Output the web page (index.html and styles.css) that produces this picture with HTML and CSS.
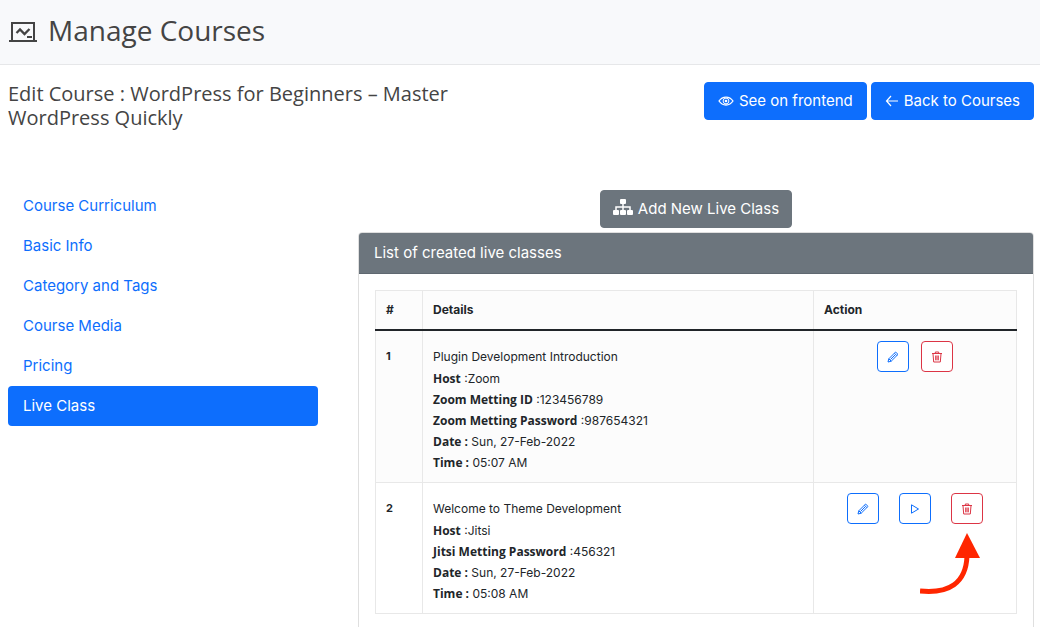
FILE: index.html
```html
<!DOCTYPE html>
<html lang="en">
<head>
<meta charset="utf-8">
<meta name="viewport" content="width=device-width, initial-scale=1">
<title>Manage Courses</title>
<link rel="stylesheet" href="styles.css">
</head>
<body>
<svg class="sprite" aria-hidden="true">
  <symbol id="pencil" viewBox="0 0 12 12">
    <path d="M1 11l.8-3.2L8.6 1l2.4 2.4-6.8 6.8zM1.8 7.8l2.4 2.4M7.4 2.2l2.4 2.4M3.4 8.6l4.8-4.8" fill="none" stroke="currentColor" stroke-linejoin="round"/>
  </symbol>
  <symbol id="trash" viewBox="0 0 12 12">
    <path d="M1 2.5h10M4.3 2.2V1h3.4v1.2M2 2.8l.7 8.2h6.6l.7-8.2M4.7 4.5v4.8M6 4.5v4.8M7.3 4.5v4.8" fill="none" stroke="currentColor"/>
  </symbol>
  <symbol id="play" viewBox="0 0 12 12">
    <path d="M2.5 1.8v8.4L9.5 6z" fill="none" stroke="currentColor"/>
  </symbol>
</svg>

<header class="page-header">
  <svg class="header-icon" viewBox="0 0 28 22" aria-hidden="true">
    <path d="M3 19V2h22v17M0 20h28" fill="none" stroke="currentColor" stroke-width="2"/>
    <path d="M7.5 12l3.5-3.500 4.500 4.500 5-5" fill="none" stroke="currentColor" stroke-width="2.300"/>
    <path d="M18 16h5" stroke="currentColor" stroke-width="2"/>
  </svg>
  <h1 class="page-title">Manage Courses</h1>
</header>

<main class="page">
  <div class="topbar">
    <h2 class="course-title">Edit Course : WordPress for Beginners – Master WordPress Quickly</h2>
    <div class="topbar-actions">
      <a class="btn btn-primary" href="#frontend">
        <svg class="icon-eye" viewBox="0 0 16 12" aria-hidden="true">
          <path d="M1 6c3.5-5.300 10.500-5.300 14 0-3.500 5.300-10.500 5.300-14 0z" fill="none" stroke="currentColor" stroke-width="1.300"/>
          <circle cx="8" cy="6" r="2.900" fill="none" stroke="currentColor"/>
          <circle cx="8" cy="6" r="1.300" fill="currentColor"/>
        </svg>
        See on frontend
      </a>
      <a class="btn btn-primary" href="#courses">
        <svg class="icon-back" viewBox="0 0 14 12" aria-hidden="true">
          <path d="M13 6H1.500M6 1L1.500 6 6 11" fill="none" stroke="currentColor" stroke-width="1.200"/>
        </svg>
        Back to Courses
      </a>
    </div>
  </div>

  <div class="columns">
    <nav class="side-nav" aria-label="Course sections">
      <a class="nav-link" href="#curriculum">Course Curriculum</a>
      <a class="nav-link" href="#info">Basic Info</a>
      <a class="nav-link" href="#category">Category and Tags</a>
      <a class="nav-link" href="#media">Course Media</a>
      <a class="nav-link" href="#pricing">Pricing</a>
      <a class="nav-link active" href="#live" aria-current="page">Live Class</a>
    </nav>

    <section class="content">
      <button class="btn btn-secondary" type="button">
        <svg class="icon-tree" viewBox="0 0 20 16" aria-hidden="true">
          <g fill="currentColor">
            <rect x="7" width="6" height="5" rx="1"/>
            <rect y="11" width="6" height="5" rx="1"/>
            <rect x="7" y="11" width="6" height="5" rx="1"/>
            <rect x="14" y="11" width="6" height="5" rx="1"/>
          </g>
          <path d="M10 4v8M3 12V8h14v4" fill="none" stroke="currentColor" stroke-width="1.500"/>
        </svg>
        Add New Live Class
      </button>

      <div class="card">
        <div class="card-header">List of created live classes</div>
        <div class="card-body">
          <table class="classes">
            <colgroup>
              <col class="col-num">
              <col>
              <col class="col-action">
            </colgroup>
            <thead>
              <tr><th scope="col">#</th><th scope="col">Details</th><th scope="col">Action</th></tr>
            </thead>
            <tbody>
              <tr>
                <th class="row-num" scope="row">1</th>
                <td class="details">
                  <p class="class-name">Plugin Development Introduction</p>
                  <p><b>Host</b> :Zoom</p>
                  <p><b>Zoom Metting ID</b> :123456789</p>
                  <p><b>Zoom Metting Password</b> :987654321</p>
                  <p><b>Date :</b> Sun, 27-Feb-2022</p>
                  <p><b>Time :</b> 05:07 AM</p>
                </td>
                <td>
                  <div class="actions">
                    <button class="icon-btn" type="button" aria-label="Edit"><svg><use href="#pencil"/></svg></button>
                    <button class="icon-btn danger" type="button" aria-label="Delete"><svg><use href="#trash"/></svg></button>
                  </div>
                </td>
              </tr>
              <tr>
                <th class="row-num" scope="row">2</th>
                <td class="details">
                  <p class="class-name">Welcome to Theme Development</p>
                  <p><b>Host</b> :Jitsi</p>
                  <p><b>Jitsi Metting Password</b> :456321</p>
                  <p><b>Date :</b> Sun, 27-Feb-2022</p>
                  <p><b>Time :</b> 05:08 AM</p>
                </td>
                <td>
                  <div class="actions actions-wide">
                    <button class="icon-btn" type="button" aria-label="Edit"><svg><use href="#pencil"/></svg></button>
                    <button class="icon-btn" type="button" aria-label="Start"><svg><use href="#play"/></svg></button>
                    <button class="icon-btn danger" type="button" aria-label="Delete"><svg><use href="#trash"/></svg></button>
                    <svg class="pointer" viewBox="0 0 60 62" aria-hidden="true">
                      <path d="M0 58C29 61 46 50 47 23" fill="none" stroke="currentColor" stroke-width="5"/>
                      <path d="M47 0l13 25H35z" fill="currentColor"/>
                    </svg>
                  </div>
                </td>
              </tr>
            </tbody>
          </table>
        </div>
      </div>
    </section>
  </div>
</main>
</body>
</html>
```

FILE: styles.css
```css
* { box-sizing: border-box; }

body {
  margin: 0;
  background: #fff;
  color: #212529;
  font: 15px/24px Inter, "Liberation Sans", sans-serif;
}

h1, h2, p { margin: 0; }

.sprite { display: none; }

.page-header {
  display: flex;
  align-items: center;
  gap: 11px;
  padding: 11px 9px 15px;
  background: #f8f9fb;
  border-bottom: 1px solid #e6e7e9;
  color: #444;
}

.header-icon { width: 28px; height: 22px; margin-top: 4px; }

.page-title {
  font: 400 28px/38px "Open Sans", sans-serif;
}

.page { padding: 17px 6px 0 8px; }

.topbar {
  display: flex;
  justify-content: space-between;
  align-items: flex-start;
  min-height: 104px;
}

.course-title {
  flex: 0 1 50%;
  color: #444;
  font: 400 20px/24px "Open Sans", sans-serif;
}

.topbar-actions { display: flex; gap: 4px; }

.btn {
  display: inline-flex;
  align-items: center;
  gap: 5px;
  padding: 6px 12px;
  border: 1px solid;
  border-radius: 4px;
  color: #fff;
  font: inherit;
  text-decoration: none;
  white-space: nowrap;
}

.btn-primary { padding: 6px 13px; background: #0d6efd; border-color: #0d6efd; }
.btn-secondary { background: #6c757d; border-color: #6c757d; }

.icon-eye { width: 16px; height: 12px; }
.icon-back { width: 14px; height: 12px; }
.icon-tree { width: 20px; height: 16px; margin-bottom: 4px; }

.columns {
  display: grid;
  grid-template-columns: 310fr 676fr;
  column-gap: 40px;
  align-items: start;
}

.side-nav { display: flex; flex-direction: column; }

.nav-link {
  padding: 8px 15px;
  border-radius: 4px;
  color: #0d6efd;
  text-decoration: none;
}

.nav-link.active { background: #0d6efd; color: #fff; }

.content {
  display: flex;
  flex-direction: column;
  align-items: center;
  gap: 4px;
  padding-top: 4px;
}

.card {
  width: 100%;
  border: 1px solid #dfdfdf;
  border-radius: 4px;
}

.card-header {
  padding: 8px 15px;
  background: #6c757d;
  border-bottom: 1px solid #5f6870;
  border-radius: 3px 3px 0 0;
  color: #fff;
}

.card-body { padding: 16px; }

.classes {
  width: 100%;
  border-collapse: collapse;
  table-layout: fixed;
  font-size: 12px;
  line-height: 21px;
}

.col-num { width: 47px; }
.col-action { width: 203px; }

.classes th,
.classes td {
  padding: 10px;
  border: 1px solid #e8e8e8;
  text-align: left;
  vertical-align: top;
}

.classes thead th {
  padding: 8px 10px 9px;
  background: #fcfcfc;
  border-bottom: 2px solid #212529;
}

.classes tbody tr:first-child { background: #fcfcfc; }

.classes .row-num { padding-top: 15px; font-size: 11px; }
.classes .details { padding-top: 15px; padding-bottom: 9px; }
.class-name { line-height: 22px; }
.details b { font-family: "Open Sans", sans-serif; font-weight: 700; }

.actions {
  position: relative;
  display: flex;
  justify-content: center;
  gap: 12px;
}

.actions-wide { gap: 20px; }

.icon-btn {
  display: flex;
  align-items: center;
  justify-content: center;
  width: 32px;
  height: 31px;
  padding: 0;
  background: #fff;
  border: 1px solid #0d6efd;
  border-radius: 4px;
  color: #0d6efd;
}

.icon-btn.danger { border-color: #dc3545; color: #dc3545; }
.icon-btn svg { width: 12px; height: 12px; }

.pointer {
  position: absolute;
  top: 40px;
  right: 26px;
  width: 60px;
  height: 62px;
  color: #ff2600;
}
```
